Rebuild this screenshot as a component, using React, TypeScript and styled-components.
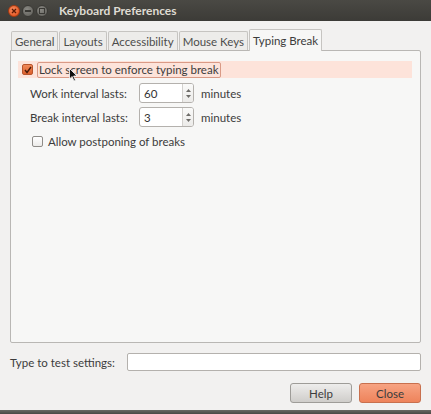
import styled, { createGlobalStyle } from 'styled-components';

const GlobalStyle = createGlobalStyle`
  *, *::before, *::after {
    box-sizing: border-box;
  }
  html, body {
    margin: 0;
    padding: 0;
    background: #4a4944;
  }
  body {
    font-family: Lato, 'Open Sans', sans-serif;
    font-size: 11.5px;
    color: #3c3c3c;
  }
`;

const tabs = ['General', 'Layouts', 'Accessibility', 'Mouse Keys', 'Typing Break'];

const Window = styled.div`
  width: 431px;
  height: 414px;
  display: flex;
  flex-direction: column;
  overflow: hidden;
`;

const TitleBar = styled.div`
  height: 21px;
  flex-shrink: 0;
  display: flex;
  align-items: center;
  gap: 2px;
  padding: 0 0 0 8px;
  background: linear-gradient(#4a4944, #3c3b37);
`;

const WinButton = styled.div<{ $close?: boolean }>`
  width: 12px;
  height: 12px;
  border-radius: 50%;
  display: flex;
  align-items: center;
  justify-content: center;
  background: ${(p) => (p.$close ? 'radial-gradient(circle at 40% 35%, #f58a5c, #df4a16)' : 'radial-gradient(circle at 40% 35%, #8a8984, #5c5b56)')};
  border: 1px solid ${(p) => (p.$close ? '#a63a10' : '#3a3935')};
`;

const Title = styled.div`
  margin-left: 9px;
  font-weight: bold;
  color: #dfdbd2;
  font-size: 12px;
`;

const Body = styled.div`
  flex: 1;
  background: #f2f1f0;
  display: flex;
  flex-direction: column;
  padding: 8px 10px 0 10px;
`;

const TabRow = styled.div`
  display: flex;
  align-items: flex-end;
  height: 21px;
  padding-left: 1px;
`;

const Tab = styled.div<{ $active?: boolean }>`
  height: ${(p) => (p.$active ? '22px' : '19px')};
  padding: 0 3px;
  display: flex;
  align-items: center;
  border: 1px solid #c6c4c1;
  border-bottom: none;
  border-radius: 2px 2px 0 0;
  margin-right: 1px;
  background: ${(p) => (p.$active ? '#f7f7f6' : '#edecea')};
  color: ${(p) => (p.$active ? '#3c3c3c' : '#4c4c4c')};
  position: relative;
  z-index: ${(p) => (p.$active ? 1 : 0)};
  margin-bottom: ${(p) => (p.$active ? '-1px' : '0')};
`;

const Panel = styled.div`
  height: 293px;
  flex-shrink: 0;
  border: 1px solid #b9b7b4;
  border-radius: 0 2px 2px 2px;
  background: #f7f7f6;
  padding: 10px 8px 10px 7px;
  display: flex;
  flex-direction: column;
  gap: 4px;
`;

const LockRow = styled.div`
  height: 17px;
  display: flex;
  align-items: center;
  gap: 4px;
  padding-left: 4px;
  background: #fde3da;
`;

const CheckBox = styled.div<{ $checked?: boolean }>`
  width: 11px;
  height: 11px;
  border-radius: 2px;
  display: flex;
  align-items: center;
  justify-content: center;
  border: 1px solid ${(p) => (p.$checked ? '#b8542b' : '#8f8c88')};
  background: ${(p) => (p.$checked ? 'linear-gradient(#f08a5a, #dd5f2c)' : 'linear-gradient(#ffffff, #ecebe9)')};
`;

const FocusLabel = styled.span`
  border: 1px solid #d99a86;
  border-radius: 2px;
  padding: 0 1px;
  line-height: 14px;
  position: relative;
`;

const Cursor = styled.svg`
  position: absolute;
  left: 31px;
  top: 5px;
`;

const IntervalGrid = styled.div`
  display: grid;
  grid-template-columns: 102px 55px auto;
  column-gap: 7px;
  row-gap: 4px;
  align-items: center;
  padding-left: 12px;
  margin-top: 1px;
`;

const Spin = styled.div`
  height: 20px;
  display: flex;
  border: 1px solid #b4b1ad;
  border-radius: 3px;
  background: #fff;
  overflow: hidden;
`;

const SpinValue = styled.div`
  flex: 1;
  display: flex;
  align-items: center;
  padding-left: 4px;
  color: #333;
`;

const SpinArrows = styled.div`
  width: 11px;
  border-left: 1px solid #d3d1ce;
  background: linear-gradient(#fafaf9, #ecebe9);
  display: flex;
  flex-direction: column;
  align-items: center;
  justify-content: center;
  gap: 3px;
`;

const PostponeRow = styled.div`
  display: flex;
  align-items: center;
  gap: 5px;
  padding-left: 14px;
  margin-top: 4px;
`;

const TestRow = styled.div`
  display: flex;
  align-items: center;
  margin-top: 10px;
  gap: 12px;
`;

const TestEntry = styled.div`
  flex: 1;
  height: 18px;
  border: 1px solid #b4b1ad;
  border-radius: 2px;
  background: #fff;
`;

const ButtonRow = styled.div`
  display: flex;
  justify-content: flex-end;
  gap: 7px;
  margin-top: 12px;
`;

const Button = styled.div<{ $primary?: boolean }>`
  width: 62px;
  height: 20px;
  display: flex;
  align-items: center;
  justify-content: center;
  border-radius: 3px;
  border: 1px solid ${(p) => (p.$primary ? '#c8704e' : '#9e9c98')};
  background: ${(p) => (p.$primary ? 'linear-gradient(#f7a382, #ee835b)' : 'linear-gradient(#eeedec, #cfcdca)')};
  color: #3c3c3c;
`;

const BottomEdge = styled.div`
  height: 4px;
  flex-shrink: 0;
  background: linear-gradient(#6a6964, #4a4944);
`;

function Arrow({ up }: { up?: boolean }) {
  return (
    <svg width="5" height="3" viewBox="0 0 5 3">
      <path d={up ? 'M0 3 L2.5 0 L5 3 Z' : 'M0 0 L2.5 3 L5 0 Z'} fill="#6e6c68" />
    </svg>
  );
}

function SpinBox({ value }: { value: string }) {
  return (
    <Spin>
      <SpinValue>{value}</SpinValue>
      <SpinArrows>
        <Arrow up />
        <Arrow />
      </SpinArrows>
    </Spin>
  );
}

function App() {
  return (
    <Window>
      <GlobalStyle />
      <TitleBar>
        <WinButton $close>
          <svg width="6" height="6" viewBox="0 0 6 6">
            <path d="M1 1 L5 5 M5 1 L1 5" stroke="#5a1a05" strokeWidth="1.3" />
          </svg>
        </WinButton>
        <WinButton>
          <svg width="6" height="2" viewBox="0 0 6 2">
            <rect width="6" height="2" fill="#3a3935" />
          </svg>
        </WinButton>
        <WinButton>
          <svg width="6" height="6" viewBox="0 0 6 6">
            <rect x="0.5" y="0.5" width="5" height="5" fill="none" stroke="#3a3935" />
          </svg>
        </WinButton>
        <Title>Keyboard Preferences</Title>
      </TitleBar>
      <Body>
        <TabRow>
          {tabs.map((t) => (
            <Tab key={t} $active={t === 'Typing Break'}>
              {t}
            </Tab>
          ))}
        </TabRow>
        <Panel>
          <LockRow>
            <CheckBox $checked>
              <svg width="8" height="8" viewBox="0 0 8 8">
                <path d="M1 4 L3 6.5 L7 1" stroke="#4a1a08" strokeWidth="1.4" fill="none" />
              </svg>
            </CheckBox>
            <FocusLabel>
              Lock screen to enforce typing break
              <Cursor width="9" height="14" viewBox="0 0 9 14">
                <path d="M0.5 0.5 L0.5 11 L3 8.5 L5 13 L6.5 12.3 L4.6 8 L8 8 Z" fill="#111" stroke="#fff" strokeWidth="0.8" />
              </Cursor>
            </FocusLabel>
          </LockRow>
          <IntervalGrid>
            <span>Work interval lasts:</span>
            <SpinBox value="60" />
            <span>minutes</span>
            <span>Break interval lasts:</span>
            <SpinBox value="3" />
            <span>minutes</span>
          </IntervalGrid>
          <PostponeRow>
            <CheckBox />
            <span>Allow postponing of breaks</span>
          </PostponeRow>
        </Panel>
        <TestRow>
          <span>Type to test settings:</span>
          <TestEntry />
        </TestRow>
        <ButtonRow>
          <Button>Help</Button>
          <Button $primary>Close</Button>
        </ButtonRow>
      </Body>
      <BottomEdge />
    </Window>
  );
}

export default App;
